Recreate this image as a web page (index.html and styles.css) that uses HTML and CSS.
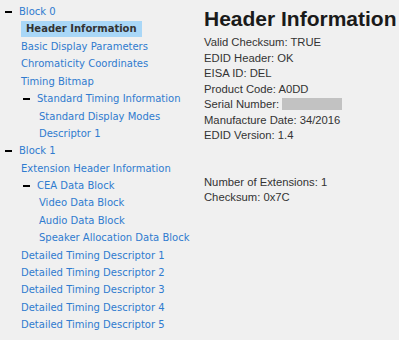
FILE: index.html
```html
<!DOCTYPE html>
<html lang="en">
<head>
    <meta charset="UTF-8">
    <title>EDID Viewer</title>
    <link rel="stylesheet" href="styles.css">
</head>
<body>

    <div class="page">
        <ul class="tree">
            <li class="node lvl1"><span class="toggle"></span><a href="#">Block 0</a></li>
            <li class="node lvl2"><a href="#" class="active">Header Information</a></li>
            <li class="node lvl2"><a href="#">Basic Display Parameters</a></li>
            <li class="node lvl2"><a href="#">Chromaticity Coordinates</a></li>
            <li class="node lvl2"><a href="#">Timing Bitmap</a></li>
            <li class="node lvl3"><span class="toggle"></span><a href="#">Standard Timing Information</a></li>
            <li class="node lvl4"><a href="#">Standard Display Modes</a></li>
            <li class="node lvl4"><a href="#">Descriptor 1</a></li>
            <li class="node lvl1"><span class="toggle"></span><a href="#">Block 1</a></li>
            <li class="node lvl2"><a href="#">Extension Header Information</a></li>
            <li class="node lvl3"><span class="toggle"></span><a href="#">CEA Data Block</a></li>
            <li class="node lvl4"><a href="#">Video Data Block</a></li>
            <li class="node lvl4"><a href="#">Audio Data Block</a></li>
            <li class="node lvl4"><a href="#">Speaker Allocation Data Block</a></li>
            <li class="node lvl2"><a href="#">Detailed Timing Descriptor 1</a></li>
            <li class="node lvl2"><a href="#">Detailed Timing Descriptor 2</a></li>
            <li class="node lvl2"><a href="#">Detailed Timing Descriptor 3</a></li>
            <li class="node lvl2"><a href="#">Detailed Timing Descriptor 4</a></li>
            <li class="node lvl2"><a href="#">Detailed Timing Descriptor 5</a></li>
        </ul>

        <div class="details">
            <h1>Header Information</h1>
            <div class="info">
                <div>Valid Checksum: TRUE</div>
                <div>EDID Header: OK</div>
                <div>EISA ID: DEL</div>
                <div>Product Code: A0DD</div>
                <div>Serial Number: <span class="hidden-value"></span></div>
                <div>Manufacture Date: 34/2016</div>
                <div>EDID Version: 1.4</div>
            </div>
            <div class="info extra">
                <div>Number of Extensions: 1</div>
                <div>Checksum: 0x7C</div>
            </div>
        </div>
    </div>

</body>
</html>
```

FILE: styles.css
```css
body {
    margin: 0;
    background-color: #f0f0f0;
    font-family: "Liberation Sans", Arial, sans-serif;
}

.page {
    display: flex;
}

.tree {
    list-style: none;
    margin: 0;
    padding: 3px 0 0 0;
    width: 204px;
    flex-shrink: 0;
    font-family: "DejaVu Sans", Verdana, sans-serif;
    font-size: 10px;
}

.node {
    display: flex;
    align-items: center;
    height: 17.4px;
    white-space: nowrap;
}

.node a {
    color: #2f7bcf;
    text-decoration: none;
}

.toggle {
    display: inline-block;
    width: 7px;
    height: 2px;
    background-color: #000;
}

.lvl1 { padding-left: 5px; }
.lvl1 .toggle { margin-right: 7px; }

.lvl2 { padding-left: 21px; }

.lvl3 { padding-left: 23px; }
.lvl3 .toggle { margin-right: 7px; }

.lvl4 { padding-left: 39px; }

.node a.active {
    display: inline-block;
    background-color: #a9d7f7;
    color: #333;
    font-weight: bold;
    padding: 0 5px;
    line-height: 16px;
}

.details {
    color: #333;
    font-size: 11.25px;
}

.details h1 {
    margin: 7px 0 4px 0;
    font-size: 21px;
    color: #1a1a1a;
}

.info {
    line-height: 15.5px;
}

.extra {
    margin-top: 31px;
}

.hidden-value {
    display: inline-block;
    width: 60px;
    height: 12px;
    background-color: #c2c2c2;
    vertical-align: -2px;
}
```
